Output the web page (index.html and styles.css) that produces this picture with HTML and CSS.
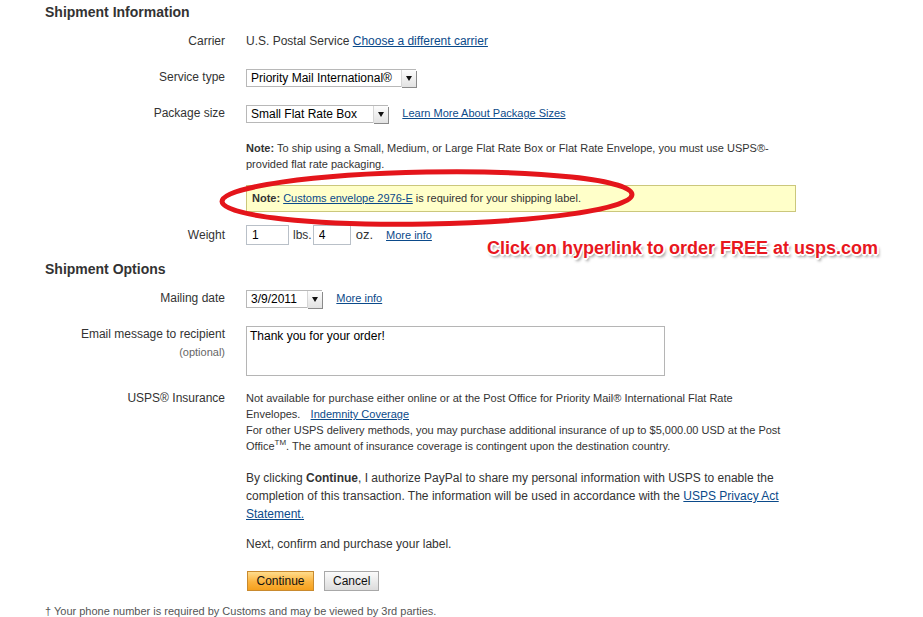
FILE: index.html
```html
<!DOCTYPE html>
<html lang="en">
<head>
    <meta charset="UTF-8">
    <title>Shipment Information</title>
    <link rel="stylesheet" href="styles.css">
</head>
<body>

<div class="page">
    <h2 class="section-title">Shipment Information</h2>

    <div class="form-row row-carrier">
        <div class="label">Carrier</div>
        <div class="field">U.S. Postal Service <a href="#">Choose a different carrier</a></div>
    </div>

    <div class="form-row row-select">
        <div class="label">Service type</div>
        <div class="field">
            <span class="select select-service">
                <span class="select-value">Priority Mail International®</span>
                <span class="select-arrow"></span>
            </span>
        </div>
    </div>

    <div class="form-row row-select">
        <div class="label">Package size</div>
        <div class="field">
            <span class="select select-package">
                <span class="select-value">Small Flat Rate Box</span>
                <span class="select-arrow"></span>
            </span>
            <a href="#" class="small-link link-sizes">Learn More About Package Sizes</a>
        </div>
    </div>

    <div class="form-row row-note">
        <div class="label"></div>
        <div class="field note-text">
            <b>Note:</b> To ship using a Small, Medium, or Large Flat Rate Box or Flat Rate Envelope, you must use USPS®-<br>
            provided flat rate packaging.
        </div>
    </div>

    <div class="form-row row-alert">
        <div class="label"></div>
        <div class="field">
            <div class="alert-box"><b>Note:</b> <a href="#">Customs envelope 2976-E</a> is required for your shipping label.</div>
        </div>
    </div>

    <div class="form-row row-weight">
        <div class="label">Weight</div>
        <div class="field weight-field">
            <input type="text" class="text-input weight-lbs" value="1">
            <span class="unit">lbs.</span>
            <input type="text" class="text-input weight-oz" value="4">
            <span class="unit unit-oz">oz.</span>
            <a href="#" class="small-link">More info</a>
        </div>
    </div>

    <h2 class="section-title options-title">Shipment Options</h2>

    <div class="form-row row-select row-date">
        <div class="label">Mailing date</div>
        <div class="field">
            <span class="select select-date">
                <span class="select-value">3/9/2011</span>
                <span class="select-arrow"></span>
            </span>
            <a href="#" class="small-link link-date">More info</a>
        </div>
    </div>

    <div class="form-row row-email">
        <div class="label">
            Email message to recipient
            <span class="optional">(optional)</span>
        </div>
        <div class="field">
            <textarea class="message">Thank you for your order!</textarea>
        </div>
    </div>

    <div class="form-row row-insurance">
        <div class="label">USPS® Insurance</div>
        <div class="field insurance-text">
            Not available for purchase either online or at the Post Office for Priority Mail® International Flat Rate<br>
            Envelopes.&nbsp;&nbsp;&nbsp;<a href="#">Indemnity Coverage</a><br>
            For other USPS delivery methods, you may purchase additional insurance of up to $5,000.00 USD at the Post<br>
            Office<sup>TM</sup>. The amount of insurance coverage is contingent upon the destination country.
        </div>
    </div>

    <div class="form-row row-consent">
        <div class="label"></div>
        <div class="field consent-text">
            By clicking <b>Continue</b>, I authorize PayPal to share my personal information with USPS to enable the<br>
            completion of this transaction. The information will be used in accordance with the <a href="#">USPS Privacy Act<br>
            Statement.</a>
        </div>
    </div>

    <div class="form-row row-next">
        <div class="label"></div>
        <div class="field">Next, confirm and purchase your label.</div>
    </div>

    <div class="form-row row-buttons">
        <div class="label"></div>
        <div class="field buttons">
            <button class="btn btn-primary">Continue</button>
            <button class="btn">Cancel</button>
        </div>
    </div>

    <p class="footnote">† Your phone number is required by Customs and may be viewed by 3rd parties.</p>
</div>

<!-- annotation drawn over the screenshot -->
<svg class="callout-ring" width="430" height="70" viewBox="0 0 430 70">
    <ellipse cx="211" cy="32" rx="205" ry="26" transform="rotate(-1 211 32)" fill="none" stroke="#e4151b" stroke-width="5"/>
</svg>
<div class="callout-text">Click on hyperlink to order FREE at usps.com</div>

</body>
</html>
```

FILE: styles.css
```css
body {
    margin: 0;
    font-family: "Liberation Sans", Arial, Helvetica, sans-serif;
    font-size: 12px;
    color: #333;
    background: #fff;
}

a {
    color: #0b4a8a;
    text-decoration: underline;
}

.page {
    padding-left: 45px;
    width: 800px;
}

.section-title {
    margin: 0;
    padding-top: 3px;
    font-size: 14px;
    line-height: 18px;
    color: #333;
}

.options-title {
    margin-top: 15px;
    padding-top: 0;
}

.form-row {
    display: grid;
    grid-template-columns: 180px 1fr;
    column-gap: 21px;
    align-items: center;
    line-height: 20px;
}

.form-row .label {
    text-align: right;
}

.row-carrier {
    margin-top: 10px;
}

.row-select {
    margin-top: 16px;
}

.row-date {
    margin-top: 10px;
}

/* fake aqua style select box */
.select {
    display: inline-flex;
    align-items: center;
    box-sizing: border-box;
    height: 18px;
    border: 1px solid #b8b8b8;
    border-right: 0;
    background: #fff;
    vertical-align: middle;
    position: relative;
}

.select-service { width: 170px; }
.select-package { width: 142px; }
.select-date { width: 76px; }

.select-value {
    flex: 1;
    padding-left: 4px;
    font-size: 12px;
    line-height: 16px;
    color: #000;
    white-space: nowrap;
}

.select-arrow {
    width: 14px;
    height: 17px;
    margin-top: 1px;
    background: linear-gradient(#fdfdfd, #e2e2e2);
    border-left: 1px solid #d6d6d6;
    box-shadow: 1px 1px 0 #8a8a8a;
    display: flex;
    align-items: center;
    justify-content: center;
}

.select-arrow::after {
    content: "";
    border-top: 5px solid #111;
    border-left: 3px solid transparent;
    border-right: 3px solid transparent;
}

.small-link {
    font-size: 11px;
}

.link-sizes {
    margin-left: 11px;
}

.link-date {
    margin-left: 11px;
}

.row-note {
    margin-top: 17px;
}

.note-text {
    font-size: 11px;
    line-height: 16px;
}

.row-alert {
    margin-top: 13px;
}

.alert-box {
    box-sizing: border-box;
    width: 550px;
    height: 27px;
    padding-left: 5px;
    background: #ffffc9;
    border: 1px solid #cbc77c;
    font-size: 11px;
    line-height: 25px;
}

.row-weight {
    margin-top: 13px;
}

.weight-field {
    display: flex;
    align-items: center;
}

.text-input {
    box-sizing: border-box;
    height: 20px;
    border: 1px solid #b9c0c8;
    padding: 0 5px;
    font-family: "Liberation Sans", Arial, sans-serif;
    font-size: 12px;
    color: #000;
}

.weight-lbs {
    width: 43px;
}

.weight-oz {
    width: 38px;
}

.unit {
    margin: 0 1px 0 4px;
}

.unit-oz {
    margin-left: 5px;
    margin-right: 13px;
    font-size: 13px;
}

.row-email {
    margin-top: 18px;
    align-items: start;
}

.row-email .label {
    line-height: 14px;
    padding-top: 1px;
}

.optional {
    display: block;
    margin-top: 4px;
    font-size: 11px;
    color: #666;
}

.message {
    display: block;
    box-sizing: border-box;
    width: 419px;
    height: 50px;
    border: 1px solid #b5b5b5;
    padding: 2px 3px;
    resize: none;
    font-family: "Liberation Sans", Arial, sans-serif;
    font-size: 12px;
    color: #000;
}

.row-insurance {
    margin-top: 14px;
    align-items: start;
    line-height: 16px;
}

.insurance-text {
    font-size: 11px;
    line-height: 16px;
}

.insurance-text a {
    margin-left: 1px;
}

.insurance-text sup {
    font-size: 8px;
    line-height: 0;
}

.row-consent {
    margin-top: 15px;
    line-height: 18px;
}

.row-next {
    margin-top: 12px;
    line-height: 18px;
}

.row-buttons {
    margin-top: 18px;
}

.buttons {
    display: flex;
    gap: 10px;
}

.btn {
    box-sizing: border-box;
    height: 20px;
    padding: 0 8px;
    border: 1px solid #a8a8a8;
    background: linear-gradient(#fbfbfb, #dcdcdc);
    font-family: "Liberation Sans", Arial, sans-serif;
    font-size: 12px;
    color: #111;
    cursor: pointer;
}

.btn-primary {
    margin-left: 1px;
    width: 67px;
    border-color: #c98a2e;
    background: linear-gradient(#ffdc8c, #fbb33e 55%, #f5a01d);
}

.footnote {
    margin: 13px 0 0 0;
    font-size: 11px;
    line-height: 14px;
    color: #555;
}

/* annotation layer */
.callout-ring {
    position: absolute;
    left: 216px;
    top: 166px;
}

.callout-text {
    position: absolute;
    left: 487px;
    top: 237px;
    font-size: 18px;
    font-weight: bold;
    line-height: 22px;
    color: #e8171e;
    white-space: nowrap;
    text-shadow:
        -1px -1px 0 #fff, 1px -1px 0 #fff, -1px 1px 0 #fff, 1px 1px 0 #fff,
        0 2px 0 #fff, 2px 0 0 #fff,
        2px 3px 3px rgba(0, 0, 0, 0.45);
}
```
